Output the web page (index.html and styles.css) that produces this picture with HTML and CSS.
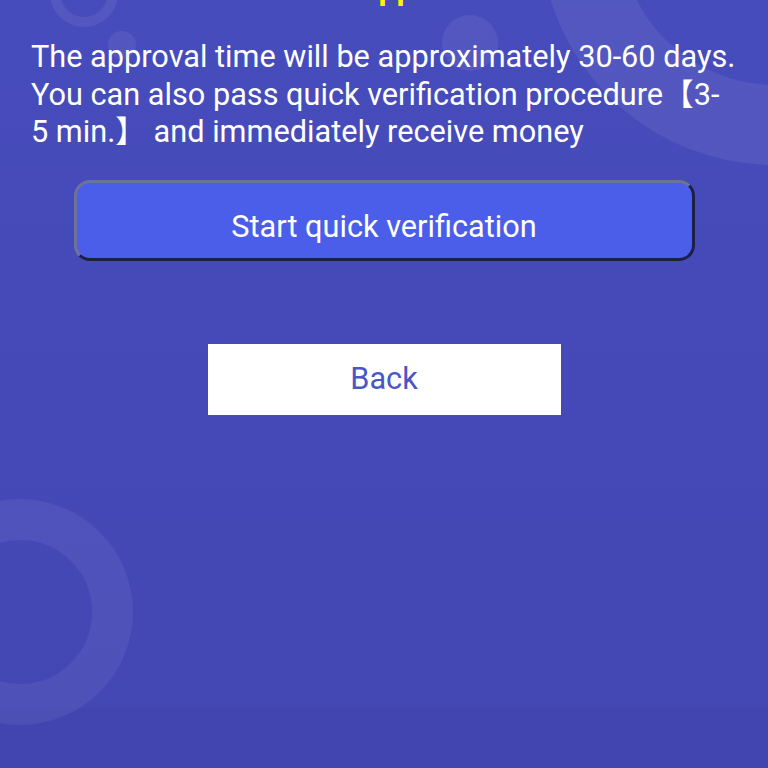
FILE: index.html
```html
<!DOCTYPE html>
<html lang="en">
<head>
<meta charset="utf-8">
<title>Quick verification</title>
<link rel="stylesheet" href="styles.css">
</head>
<body>
<div class="screen">
  <div class="deco ring-top-left"></div>
  <div class="deco dot-small"></div>
  <div class="deco dot-mid"></div>
  <div class="deco ring-big"></div>
  <div class="deco ring-bottom-left"></div>

  <h1 class="title">Loan approval</h1>
  <p class="message">The approval time will be approximately 30-60 days. You can also pass quick verification procedure【3-<br>5 min.】 and immediately receive money</p>

  <div class="actions">
    <button class="btn-primary" type="button">Start quick verification</button>
    <button class="btn-back" type="button">Back</button>
  </div>

  <div class="footer"></div>
</div>
</body>
</html>
```

FILE: styles.css
```css
html, body {
  margin: 0;
  padding: 0;
}

body {
  font-family: Roboto, "Noto Sans", "Noto Sans CJK SC", sans-serif;
  background: #4549b8;
}

.screen {
  position: relative;
  width: 768px;
  height: 768px;
  overflow: hidden;
  display: flex;
  flex-direction: column;
  background: linear-gradient(180deg, #474cbc 0%, #4549b7 60%, #4347b3 100%);
}

.deco {
  position: absolute;
  border-radius: 50%;
  box-sizing: border-box;
  z-index: 0;
}

.ring-top-left {
  left: 50px;
  top: -41px;
  width: 68px;
  height: 68px;
  border: 10px solid rgba(255, 255, 255, 0.065);
}

.dot-small {
  left: 108px;
  top: 31px;
  width: 28px;
  height: 28px;
  background: rgba(255, 255, 255, 0.065);
}

.dot-mid {
  left: 442px;
  top: 15px;
  width: 56px;
  height: 56px;
  background: rgba(255, 255, 255, 0.065);
}

.ring-big {
  left: 540px;
  top: -305px;
  width: 470px;
  height: 470px;
  border: 80px solid rgba(255, 255, 255, 0.065);
}

.ring-bottom-left {
  left: -93px;
  top: 499px;
  width: 226px;
  height: 226px;
  border: 41px solid rgba(255, 255, 255, 0.055);
}

.title {
  position: relative;
  z-index: 1;
  margin: -31px 0 0;
  font-size: 32px;
  line-height: 40px;
  font-weight: 700;
  color: #fff200;
  text-align: center;
}

.message {
  position: relative;
  z-index: 1;
  margin: 29px 0 0;
  padding: 0 20px 0 31px;
  font-size: 30.7px;
  line-height: 37.5px;
  color: #ffffff;
}

.actions {
  position: relative;
  z-index: 1;
  display: flex;
  flex-direction: column;
  align-items: center;
  margin-top: 29px;
}

.btn-primary {
  box-sizing: border-box;
  width: 621px;
  height: 81px;
  padding: 13px 0 0;
  border: 3px solid;
  border-color: #6e7296 #1d1f45 #1d1f45 #6e7296;
  border-radius: 16px;
  background: #4b5ee9;
  color: #ffffff;
  font-family: inherit;
  font-size: 30.7px;
  line-height: 36px;
  cursor: pointer;
}

.btn-back {
  box-sizing: border-box;
  width: 353px;
  height: 71px;
  margin-top: 83px;
  padding: 0;
  border: none;
  background: #ffffff;
  color: #4a55c6;
  font-family: inherit;
  font-size: 30.7px;
  line-height: 36px;
  cursor: pointer;
}

.footer {
  margin-top: auto;
  height: 60px;
  background: #4245b0;
}
```
